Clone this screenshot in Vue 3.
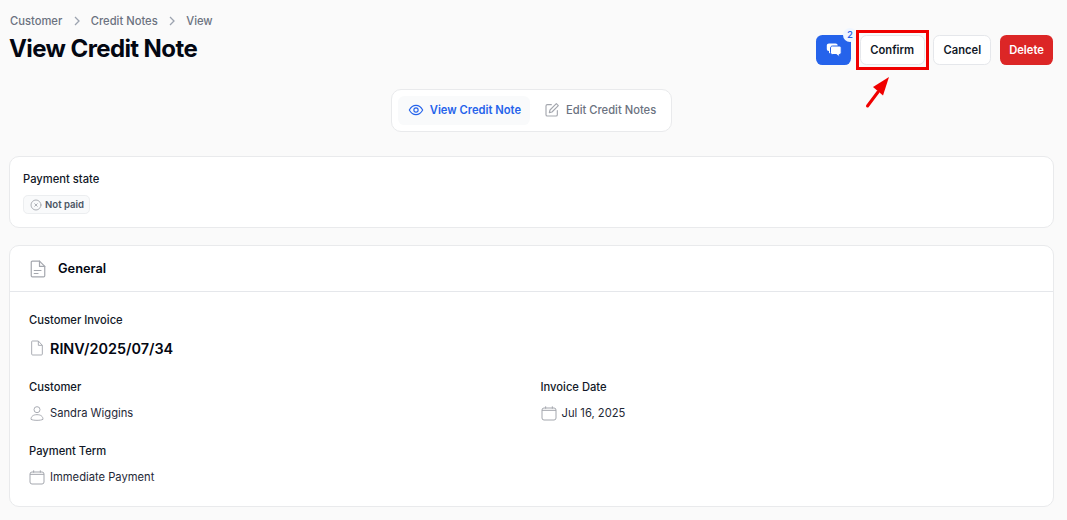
<script setup>
</script>

<template>
  <div class="page">
    <header class="head">
      <div>
        <nav class="crumbs">
          <span>Customer</span>
          <svg class="chev" viewBox="0 0 8 10"><path d="M2 1l4 4-4 4" /></svg>
          <span>Credit Notes</span>
          <svg class="chev" viewBox="0 0 8 10"><path d="M2 1l4 4-4 4" /></svg>
          <span>View</span>
        </nav>
        <h1>View Credit Note</h1>
      </div>
      <div class="actions">
        <button class="btn chat">
          <svg viewBox="0 0 16 14" width="16" height="14">
            <path d="M3 0.500h6.500c1.300 0 2.200.8 2.200 2v3.500c0 1.200-.9 2-2.200 2H6L3 10.500V8C1.500 8 .8 7.200 .8 6V2.500C.8 1.300 1.700.5 3 .5z" fill="#fff" />
            <path d="M6.500 3h6.700c1.200 0 2 .8 2 2v4.500c0 1.200-.8 2-2 2v2.300l-2.700-2.300H6.500c-1.200 0-2-.8-2-2V5c0-1.200.8-2 2-2z" fill="#fff" stroke="#2563eb" stroke-width="1" />
          </svg>
          <span class="badge">2</span>
        </button>
        <div class="confirm-wrap">
          <button class="btn plain confirm">Confirm</button>
        </div>
        <button class="btn plain">Cancel</button>
        <button class="btn danger">Delete</button>
        <svg class="arrow" viewBox="0 0 28 36" width="28" height="36">
          <path d="M3.500 32L14 18" stroke="#f00000" stroke-width="3" stroke-linecap="round" />
          <path d="M25 3L9 13l10 8.500z" fill="#f00000" />
        </svg>
      </div>
    </header>

    <div class="tabs-wrap">
      <div class="tabs">
        <div class="tab active">
          <svg viewBox="0 0 24 24" width="16" height="16" fill="none" stroke="currentColor" stroke-width="1.700">
            <path d="M2 12c2.500-4.700 6-7 10-7s7.500 2.300 10 7c-2.500 4.700-6 7-10 7s-7.500-2.300-10-7z" />
            <circle cx="12" cy="12" r="3.200" />
          </svg>
          <span>View Credit Note</span>
        </div>
        <div class="tab">
          <svg viewBox="0 0 24 24" width="16" height="16" fill="none" stroke="#a4a7ae" stroke-width="1.700" stroke-linejoin="round" stroke-linecap="round">
            <path d="M11 4H5a2 2 0 0 0-2 2v13a2 2 0 0 0 2 2h13a2 2 0 0 0 2-2v-6" />
            <path d="M18.500 2.500l3 3L12 15l-4 1 1-4z" />
          </svg>
          <span>Edit Credit Notes</span>
        </div>
      </div>
    </div>

    <section class="card state">
      <div class="label">Payment state</div>
      <div class="pill">
        <svg viewBox="0 0 24 24" width="12" height="12" fill="none" stroke="#a4a7ae" stroke-width="1.800" stroke-linecap="round">
          <circle cx="12" cy="12" r="10" />
          <path d="M9.500 9.500l5 5M14.500 9.500l-5 5" />
        </svg>
        <span>Not paid</span>
      </div>
    </section>

    <section class="card general">
      <div class="general-head">
        <svg viewBox="0 0 24 24" width="18" height="18" fill="none" stroke="#a4a7ae" stroke-width="1.600" stroke-linejoin="round" stroke-linecap="round">
          <path d="M4.500 1.500h9.500l7 7v12.500a1.500 1.500 0 0 1-1.500 1.500h-15A1.500 1.500 0 0 1 3 21V3a1.500 1.500 0 0 1 1.500-1.500z" />
          <path d="M14 1.500v7h7M7 14h9M7 18h5" />
        </svg>
        <h2>General</h2>
      </div>
      <div class="general-body">
        <div class="label">Customer Invoice</div>
        <div class="invoice">
          <svg viewBox="0 0 24 24" width="16" height="16" fill="none" stroke="#a4a7ae" stroke-width="1.400" stroke-linejoin="round">
            <path d="M5 1.500h9l6 6.500v13a1.500 1.500 0 0 1-1.500 1.500h-13A1.500 1.500 0 0 1 4 21V2.500a1 1 0 0 1 1-1z" />
            <path d="M14 1.500V8h6" />
          </svg>
          <span>RINV/2025/07/34</span>
        </div>
        <div class="grid">
          <div class="field">
            <div class="label">Customer</div>
            <div class="value">
              <svg viewBox="0 0 24 24" width="16" height="16" fill="none" stroke="#a4a7ae" stroke-width="1.400">
                <circle cx="12" cy="7" r="4.500" />
                <path d="M3 21.500c0-4.500 3.500-7 9-7s9 2.500 9 7c-2 1-5 1.500-9 1.500s-7-.5-9-1.500z" />
              </svg>
              <span>Sandra Wiggins</span>
            </div>
          </div>
          <div class="field">
            <div class="label">Invoice Date</div>
            <div class="value">
              <svg viewBox="0 0 24 24" width="16" height="16" fill="none" stroke="#a4a7ae" stroke-width="1.500">
                <rect x="1.500" y="4.500" width="21" height="18" rx="3" />
                <path d="M1.500 8h21M7 2v3.500M17 2v3.500" />
              </svg>
              <span>Jul 16, 2025</span>
            </div>
          </div>
          <div class="field">
            <div class="label">Payment Term</div>
            <div class="value">
              <svg viewBox="0 0 24 24" width="16" height="16" fill="none" stroke="#a4a7ae" stroke-width="1.500">
                <rect x="1.500" y="4.500" width="21" height="18" rx="3" />
                <path d="M1.500 8h21M7 2v3.500M17 2v3.500" />
              </svg>
              <span>Immediate Payment</span>
            </div>
          </div>
        </div>
      </div>
    </section>
  </div>
</template>

<style>
html, body { margin: 0; background: #fafafa; }
</style>

<style scoped>
.page {
  box-sizing: border-box;
  width: 1067px;
  height: 520px;
  overflow: hidden;
  padding: 13px 13px 0 9px;
  font-family: Inter, "Liberation Sans", sans-serif;
  color: #030712;
  background: #fafafa;
}
.head { display: flex; justify-content: space-between; align-items: flex-start; height: 76px; padding-left: 1px; }
.crumbs { display: flex; align-items: center; height: 14px; margin-top: 1px; font-size: 11.200px; font-weight: 500; color: #6b7280; }
.chev { width: 8px; height: 10px; margin: 0 10px 0 10.500px; fill: none; stroke: #9ca3af; stroke-width: 1.300; }
h1 { margin: 6px 0 0 -1px; font-size: 24px; line-height: 30px; font-weight: 700; letter-spacing: -0.600px; }
.actions { position: relative; display: flex; gap: 8.670px; padding-top: 21.500px; margin-right: 1px; }
.btn {
  box-sizing: border-box;
  height: 30px;
  border: 0;
  border-radius: 6.400px;
  font: 600 11.200px Inter, "Liberation Sans", sans-serif;
  padding: 0;
}
.chat { position: relative; width: 35px; background: #2563eb; display: flex; align-items: center; justify-content: center; }
.badge {
  position: absolute; top: -7px; right: -6px;
  width: 14px; height: 14px; border-radius: 50%;
  background: #eff6ff; color: #2563eb;
  font-size: 9.600px; font-weight: 500; line-height: 14px; text-align: center;
}
.plain { width: 58px; background: #fff; border: 1px solid #e5e7eb; color: #111827; }
.confirm-wrap { position: relative; height: 30px; }
.confirm-wrap::after {
  content: "";
  position: absolute;
  inset: -5px -4px;
  border: 3px solid #f00000;
  pointer-events: none;
}
.confirm { width: 65px; }
.danger { width: 53px; background: #dc2626; color: #fff; }
.arrow { position: absolute; left: 48px; top: 61px; }
.tabs-wrap { display: flex; justify-content: center; }
.tabs {
  box-sizing: border-box;
  display: flex; gap: 4px; height: 43px; padding: 6px;
  background: #fff; border: 1px solid #e9eaec; border-radius: 10px;
}
.tab {
  box-sizing: border-box;
  display: flex; align-items: center; gap: 6px; padding: 0 9px 1px 10px;
  height: 29px; font-size: 11.200px; font-weight: 500; color: #6b7280; border-radius: 6.400px;
}
.tab.active { background: #f9fafb; color: #2563eb; font-weight: 600; }
.card { background: #fff; border: 1px solid #e9eaec; border-radius: 10px; box-sizing: border-box; }
.state { height: 72px; margin-top: 24px; padding: 14px 13px; }
.label { font-size: 11.200px; line-height: 16px; font-weight: 500; color: #111827; }
.pill {
  display: inline-flex; align-items: center; gap: 3px;
  box-sizing: border-box; height: 19px; margin-top: 8px; padding: 0 5px 0 6px;
  background: #f9fafb; border: 1px solid #eceef0; border-radius: 4.800px;
  font-size: 9.600px; font-weight: 600; color: #4b5563;
}
.general { height: 262px; margin-top: 17px; }
.general-head { display: flex; align-items: center; gap: 11px; height: 45px; padding-left: 19px; border-bottom: 1px solid #e5e7eb; }
h2 { margin: 0; font-size: 12.800px; font-weight: 600; color: #030712; }
.general-body { padding: 20px 19px 0; }
.invoice { display: flex; align-items: center; gap: 5px; margin-top: 8px; height: 24px; font-size: 14.400px; font-weight: 600; color: #030712; }
.grid { display: grid; grid-template-columns: 1fr 1fr; column-gap: 18px; row-gap: 22px; margin-top: 19px; }
.value { display: flex; align-items: center; gap: 5px; margin-top: 10px; height: 16px; font-size: 11.200px; color: #1f2937; }
</style>
